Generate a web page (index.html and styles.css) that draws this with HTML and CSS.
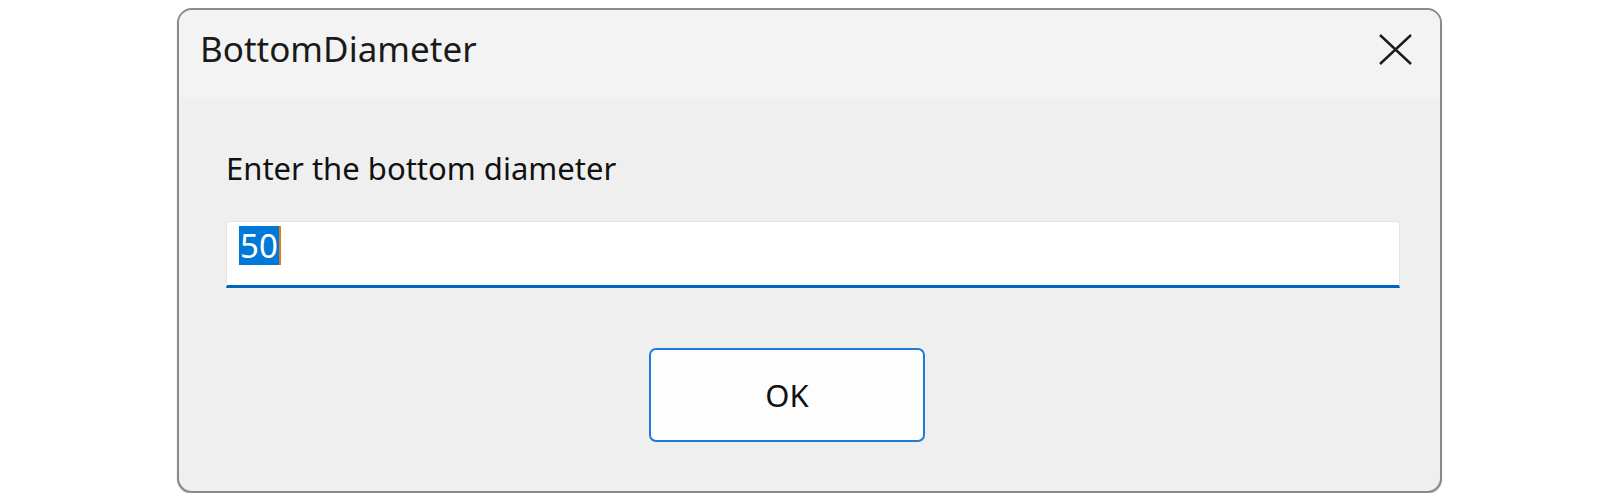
FILE: index.html
```html
<!DOCTYPE html>
<html>
<head>
<meta charset="UTF-8">
<title>BottomDiameter</title>
<link rel="stylesheet" href="styles.css">
</head>
<body>
    <div class="dialog">
        <div class="titlebar">
            <span class="title">BottomDiameter</span>
            <svg class="close" width="33" height="31" viewBox="0 0 33 31">
                <path d="M1 1 L32 30 M32 1 L1 30" stroke="#1b1b1b" stroke-width="2.4" fill="none"/>
            </svg>
        </div>
        <div class="content">
            <div class="prompt">Enter the bottom diameter</div>
            <div class="textbox"><span class="selected">50</span></div>
            <div class="buttons">
                <button class="btn-ok">OK</button>
            </div>
        </div>
    </div>
</body>
</html>
```

FILE: styles.css
```css
/* Input dialog */
body{
    margin: 0;
    background: #ffffff;
    font-family: "Noto Sans", "Open Sans", sans-serif;
    color: #1a1a1a;
}
.dialog{
    box-sizing: border-box;
    width: 1265px;
    height: 485px;
    margin: 8px 0 0 177px;
    border: 2px solid #8a8a8a;
    border-radius: 15px;
    background: #efefef;
    box-shadow: 0 1px 1px rgba(0, 0, 0, 0.35);
    overflow: hidden;
}
.titlebar{
    box-sizing: border-box;
    height: 87px;
    padding: 0 28px 9px 21px;
    display: flex;
    align-items: center;
    justify-content: space-between;
    background: #f3f3f3;
}
.title{
    font-size: 35px;
    line-height: 40px;
    color: #1a1a1a;
}
.close{
    display: block;
}
.content{
    padding: 51px 40px 0 47px;
}
.prompt{
    font-size: 31px;
    line-height: 40px;
    color: #111;
}
.textbox{
    box-sizing: border-box;
    height: 67px;
    margin-top: 33px;
    padding: 4px 12px 0;
    background: #ffffff;
    border: 1px solid #e4e4e4;
    border-bottom: 3px solid #0067c0;
    border-radius: 3px 3px 0 0;
}
.selected{
    display: inline-block;
    height: 39px;
    padding: 0 1px;
    font-size: 33px;
    line-height: 39px;
    color: #ffffff;
    background: #0078d7;
    border-right: 2px solid #e07a1f;
}
.buttons{
    display: flex;
    margin-top: 60px;
    padding-left: 423px;
}
.btn-ok{
    box-sizing: border-box;
    width: 276px;
    height: 94px;
    border: 2px solid #1f7bd8;
    border-radius: 7px;
    background: #fdfdfd;
    font-family: "Noto Sans", "Open Sans", sans-serif;
    font-size: 31px;
    color: #111;
    padding: 0;
}
```
